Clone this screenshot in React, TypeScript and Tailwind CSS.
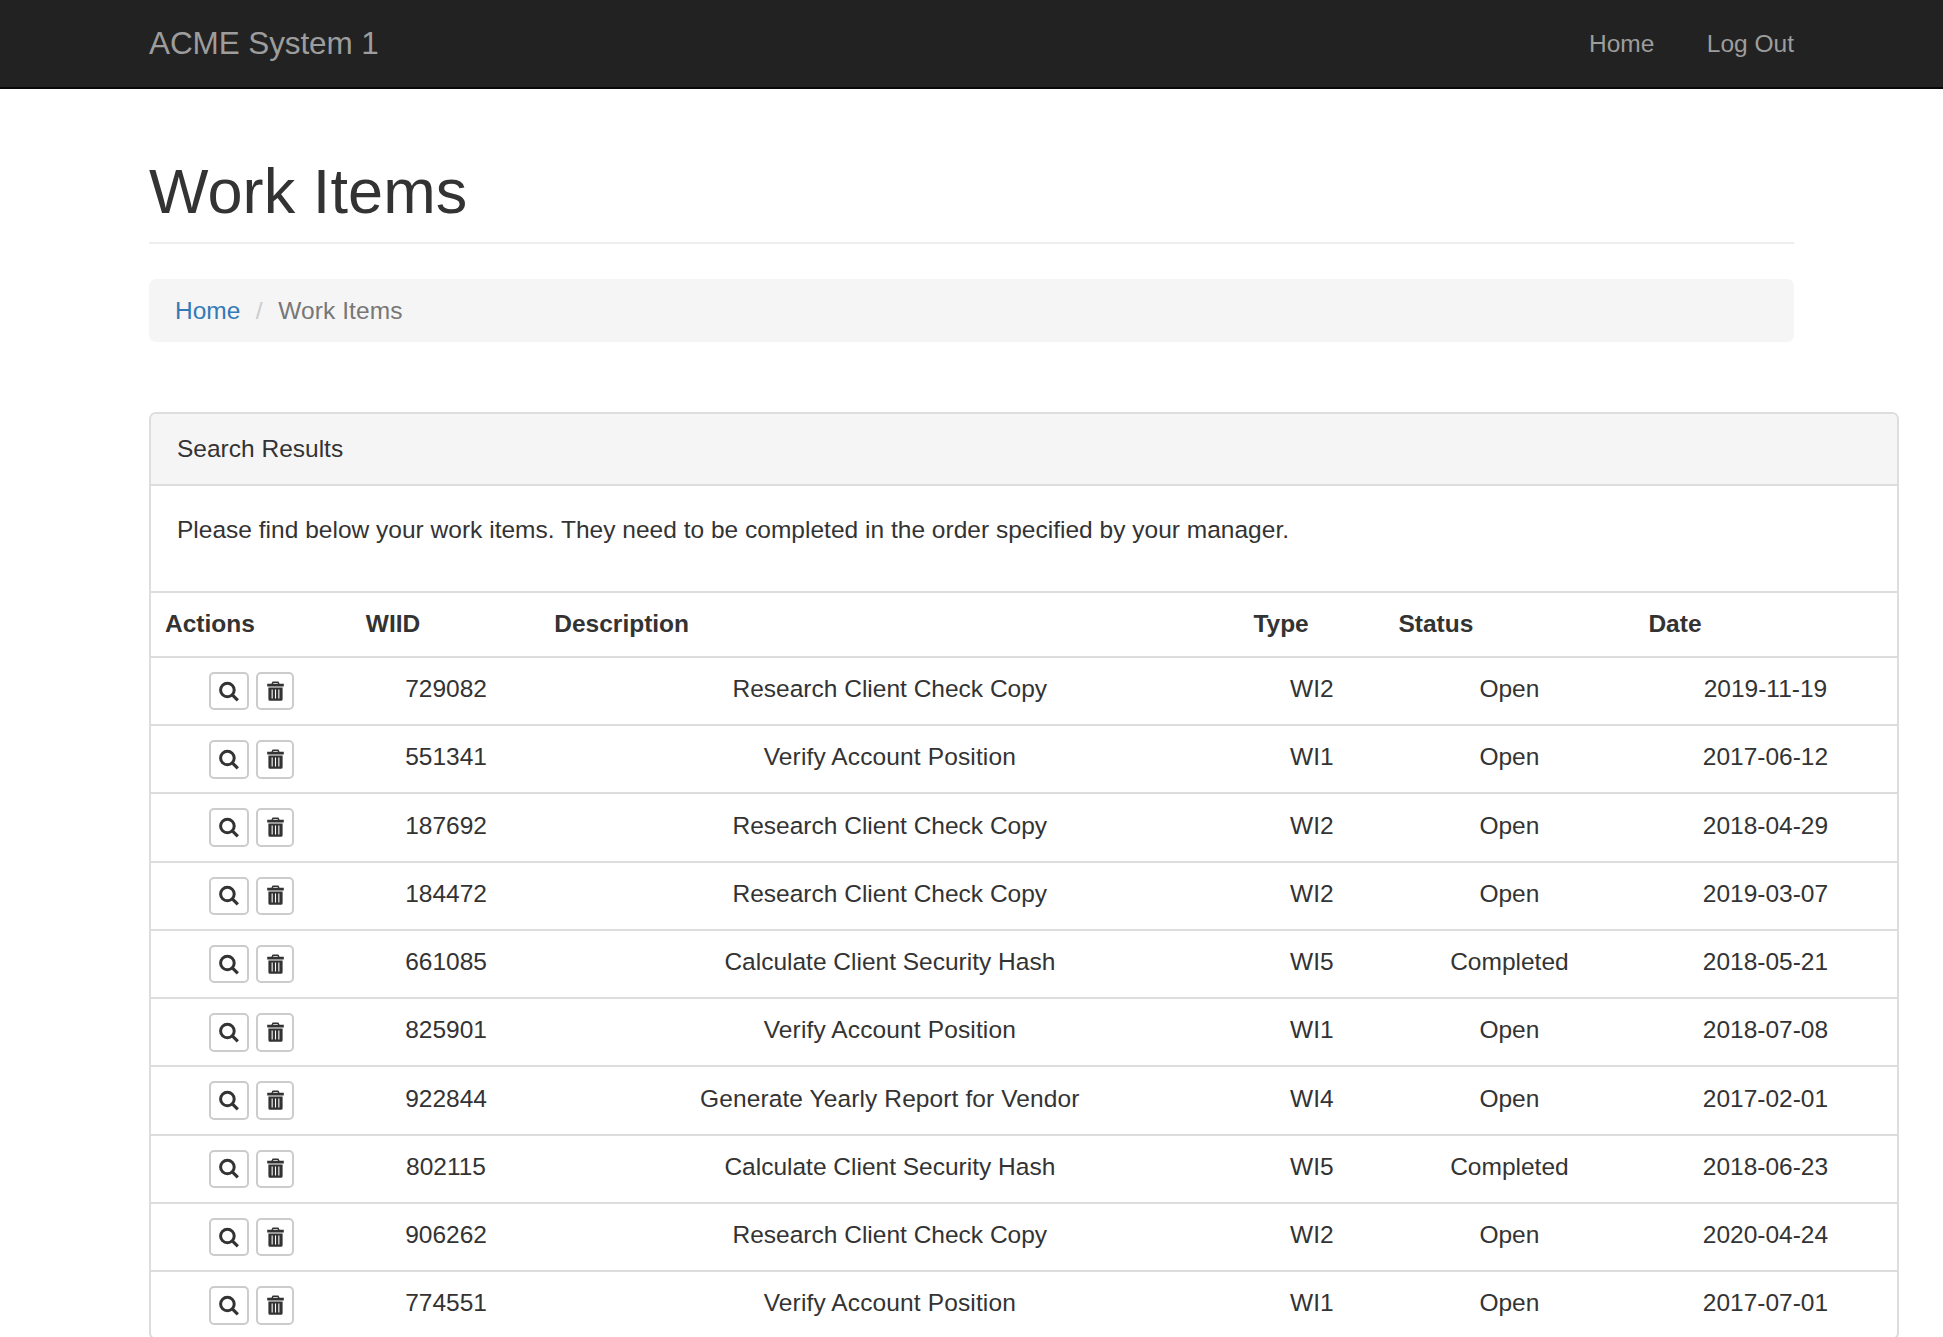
const rows = [
  ["729082", "Research Client Check Copy", "WI2", "Open", "2019-11-19"],
  ["551341", "Verify Account Position", "WI1", "Open", "2017-06-12"],
  ["187692", "Research Client Check Copy", "WI2", "Open", "2018-04-29"],
  ["184472", "Research Client Check Copy", "WI2", "Open", "2019-03-07"],
  ["661085", "Calculate Client Security Hash", "WI5", "Completed", "2018-05-21"],
  ["825901", "Verify Account Position", "WI1", "Open", "2018-07-08"],
  ["922844", "Generate Yearly Report for Vendor", "WI4", "Open", "2017-02-01"],
  ["802115", "Calculate Client Security Hash", "WI5", "Completed", "2018-06-23"],
  ["906262", "Research Client Check Copy", "WI2", "Open", "2020-04-24"],
  ["774551", "Verify Account Position", "WI1", "Open", "2017-07-01"],
];

function SearchIcon() {
  return (
    <svg width="21" height="21" viewBox="0 0 21 21" fill="none" stroke="#333" strokeWidth="3">
      <circle cx="9.4" cy="9" r="6.8" />
      <path d="M14.3 13.9 L19.8 19.4" strokeWidth="3.2" />
    </svg>
  );
}

function TrashIcon() {
  return (
    <svg width="21" height="21" viewBox="0 0 21 21" fill="#333">
      <path
        fillRule="evenodd"
        d="M7.6 0.6 h5.8 l1.2 2.2 H18.8 V5.4 H2.2 V2.8 H6.4 Z M8.5 1.9 L8 2.8 h5 l-0.5 -0.9 Z"
      />
      <path
        fillRule="evenodd"
        d="M3.4 6.4 H17.6 V18.2 Q17.6 19.8 16 19.8 H5 Q3.4 19.8 3.4 18.2 Z M6.6 8.6 V17.6 H7.7 V8.6 Z M9.95 8.6 V17.6 H11.05 V8.6 Z M13.3 8.6 V17.6 H14.4 V8.6 Z"
      />
    </svg>
  );
}

const th = "border-t-2 border-[#ddd] px-[14px] pt-[13px] pb-[15px] text-left align-top font-bold leading-[35px]";
const tdAction = "border-t-2 border-[#ddd] px-[14px] pt-[14px] pb-0 text-center align-top leading-[35px]";
const td = "border-t-2 border-[#ddd] px-[14px] pt-[13.4px] pb-0 text-center align-top leading-[35px]";

function spacing(text: string) {
  if (text.startsWith("Verify")) return "tracking-[0.13px]";
  if (text.startsWith("Generate")) return "tracking-[0.11px]";
  return "";
}

export default function App() {
  return (
    <div className="h-[1337px] overflow-hidden bg-white text-[24.5px] text-[#333] font-['Liberation_Sans',Arial,sans-serif]">
      <nav className="h-[89px] border-b-2 border-[#080808] bg-[#222]">
        <div className="mx-auto flex h-[87px] w-[1645px] items-center justify-between">
          <a className="text-[31.5px] leading-[35px] tracking-[-0.1px] text-[#9d9d9d]">ACME System 1</a>
          <div className="flex items-center gap-[52.5px] leading-[35px] text-[#9d9d9d]">
            <a>Home</a>
            <a>Log Out</a>
          </div>
        </div>
      </nav>

      <div className="mx-auto w-[1645px]">
        <div className="mt-[68px] border-b-2 border-[#eee] pb-[16px]">
          <h1 className="text-[63px] leading-[69.3px] font-normal tracking-[0.1px]">Work Items</h1>
        </div>

        <div className="mt-[34.5px] flex h-[63px] items-center rounded-[7px] bg-[#f5f5f5] px-[26px] leading-[35px]">
          <a className="text-[#337ab7]">Home</a>
          <span className="mx-[15.5px] text-[#ccc]">/</span>
          <span className="tracking-[0.1px] text-[#777]">Work Items</span>
        </div>

        <div className="mt-[70px] w-[1749.5px] rounded-[7px] border-2 border-[#ddd]">
          <div className="rounded-t-[5px] border-b-2 border-[#ddd] bg-[#f5f5f5] px-[26px] pt-[17px] pb-[18px] leading-[35px]">
            Search Results
          </div>
          <div className="h-[105px] px-[26px] pt-[26px] leading-[35px] tracking-[0.012px]">
            Please find below your work items. They need to be completed in the order specified by your manager.
          </div>
          <table className="w-full table-fixed border-separate border-spacing-0">
            <colgroup>
              <col className="w-[200.75px]" />
              <col className="w-[188.5px]" />
              <col className="w-[699px]" />
              <col className="w-[145px]" />
              <col className="w-[250px]" />
              <col className="w-[262px]" />
            </colgroup>
            <thead>
              <tr>
                <th className={th}>Actions</th>
                <th className={th}>WIID</th>
                <th className={th}>Description</th>
                <th className={th}>Type</th>
                <th className={th}>Status</th>
                <th className={th}>Date</th>
              </tr>
            </thead>
            <tbody>
              {rows.map((r) => (
                <tr key={r[0]} className="h-[68.25px]">
                  <td className={tdAction}>
                    <div className="flex justify-center gap-[7.5px]">
                      <button className="flex h-[38.5px] w-[40px] items-center justify-center rounded-[5px] border-2 border-[#ccc] bg-white">
                        <SearchIcon />
                      </button>
                      <button className="flex h-[38.5px] w-[38px] items-center justify-center rounded-[5px] border-2 border-[#ccc] bg-white">
                        <TrashIcon />
                      </button>
                    </div>
                  </td>
                  {r.map((c, i) => (
                    <td key={i} className={td}>
                      <span className={spacing(c)}>{c}</span>
                    </td>
                  ))}
                </tr>
              ))}
            </tbody>
          </table>
        </div>
      </div>
    </div>
  );
}
